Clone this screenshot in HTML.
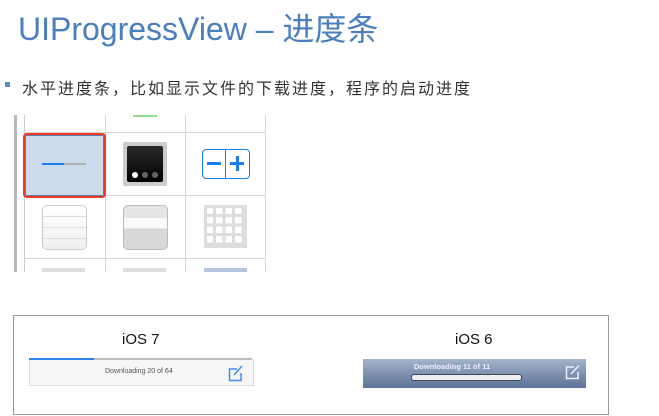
<!DOCTYPE html>
<html><head><meta charset="utf-8"><style>
body{margin:0;width:659px;height:416px;background:#fff;position:relative;overflow:hidden;font-family:"Liberation Sans","Noto Sans CJK SC",sans-serif}
.a{position:absolute}
</style></head><body>
<div class="a" style="left:18px;top:4px;font-size:32px;color:#4a7fbd;white-space:nowrap;letter-spacing:0px">UIProgressView – 进度条</div>
<div class="a" style="left:5px;top:82px;width:5px;height:5px;background:#5b8dc9"></div>
<div class="a" style="left:22px;top:75px;font-size:16px;color:#333;white-space:nowrap;letter-spacing:2px">水平进度条，比如显示文件的下载进度，程序的启动进度</div>

<!-- grid -->
<div class="a" style="left:14px;top:115px;width:3px;height:157px;background:#b8b8b8"></div>
<div class="a" style="left:24px;top:115px;width:1px;height:157px;background:#ccc"></div>
<div class="a" style="left:105px;top:115px;width:1px;height:157px;background:#d6d6d6"></div>
<div class="a" style="left:185px;top:115px;width:1px;height:157px;background:#d6d6d6"></div>
<div class="a" style="left:265px;top:115px;width:1px;height:157px;background:#d6d6d6"></div>
<div class="a" style="left:24px;top:132px;width:242px;height:1px;background:#d6d6d6"></div>
<div class="a" style="left:24px;top:195px;width:242px;height:1px;background:#d6d6d6"></div>
<div class="a" style="left:24px;top:258px;width:242px;height:1px;background:#d6d6d6"></div>
<div class="a" style="left:133px;top:115px;width:24px;height:2px;background:#8fdc8f"></div>
<div class="a" style="left:23px;top:133px;width:79px;height:61px;border:2px solid #f03a1e;border-radius:4px;background:#ccdcee;box-shadow:inset 0 0 0 1px #5a7cb0"></div>
<div class="a" style="left:42px;top:163px;width:22px;height:2px;background:#1a7ef0"></div>
<div class="a" style="left:64px;top:163px;width:22px;height:2px;background:#b0b0b0"></div>
<div class="a" style="left:123px;top:142px;width:44px;height:44px;background:#ccc;border-radius:2px"></div>
<div class="a" style="left:127px;top:146px;width:36px;height:36px;background:linear-gradient(#2a2a2a,#000);border-radius:2px"></div>
<div class="a" style="left:132px;top:172px;width:6px;height:6px;border-radius:50%;background:#fff"></div>
<div class="a" style="left:142px;top:172px;width:6px;height:6px;border-radius:50%;background:#666"></div>
<div class="a" style="left:152px;top:172px;width:6px;height:6px;border-radius:50%;background:#666"></div>
<div class="a" style="left:202px;top:149px;width:46px;height:28px;border:1.5px solid #1a7ef0;border-radius:4px"></div>
<div class="a" style="left:225px;top:149px;width:1px;height:30px;background:#1a7ef0"></div>
<div class="a" style="left:207px;top:162px;width:14px;height:3px;background:#1a7ef0"></div>
<div class="a" style="left:230px;top:162px;width:14px;height:3px;background:#1a7ef0"></div>
<div class="a" style="left:235.5px;top:156px;width:3px;height:15px;background:#1a7ef0"></div>
<div class="a" style="left:42px;top:205px;width:43px;height:43px;border:1px solid #ccc;border-radius:5px;background:linear-gradient(#fff,#f0f0f0)"></div>
<div class="a" style="left:43px;top:216px;width:43px;height:1px;background:#ddd"></div>
<div class="a" style="left:43px;top:227px;width:43px;height:1px;background:#ddd"></div>
<div class="a" style="left:43px;top:238px;width:43px;height:1px;background:#ddd"></div>
<div class="a" style="left:123px;top:205px;width:43px;height:43px;border:1px solid #bbb;border-radius:5px;background:linear-gradient(#e4e4e4 0,#e4e4e4 28%,#fafafa 28%,#fafafa 52%,#d8d8d8 52%)"></div>
<div class="a" style="left:204px;top:205px;width:43px;height:43px;background:#ddd"></div>
<div class="a" style="left:207px;top:208px;width:37px;height:37px;background-image:linear-gradient(90deg,transparent 6px,#ddd 6px,#ddd 9px,transparent 9px),linear-gradient(transparent 6px,#ddd 6px,#ddd 9px,transparent 9px);background-size:9.5px 9.5px;background-color:#fff"></div>
<div class="a" style="left:42px;top:268px;width:43px;height:4px;background:#ddd"></div>
<div class="a" style="left:123px;top:268px;width:43px;height:4px;background:#ddd"></div>
<div class="a" style="left:204px;top:268px;width:43px;height:4px;background:#b5c5e0"></div>

<!-- bottom box -->
<div class="a" style="left:13px;top:315px;width:594px;height:98px;border:1px solid #999"></div>
<div class="a" style="left:122px;top:331px;font-size:15px;color:#111">iOS 7</div>
<div class="a" style="left:455px;top:331px;font-size:15px;color:#111">iOS 6</div>
<div class="a" style="left:29px;top:359px;width:223px;height:26px;background:#f6f6f6;border:1px solid #ddd;border-top:none"></div>
<div class="a" style="left:29px;top:358px;width:223px;height:2px;background:#bbb"></div>
<div class="a" style="left:29px;top:358px;width:65px;height:2px;background:#2a85ee"></div>
<div class="a" style="left:105px;top:368px;font-size:7px;color:#555">Downloading 20 of 64</div>
<svg class="a" style="left:228px;top:364px" width="16" height="18" viewBox="0 0 16 18"><path d="M9 5H1.5V16.5H13V9" fill="none" stroke="#3d8ef0" stroke-width="1.5"/><path d="M6 11L14 2" stroke="#3d8ef0" stroke-width="1.5"/></svg>
<div class="a" style="left:363px;top:359px;width:223px;height:29px;background:linear-gradient(#a3b3c9,#5b7399)"></div>
<div class="a" style="left:367px;top:362px;width:170px;text-align:center;font-size:7.5px;font-weight:bold;color:#eef">Downloading 11 of 11</div>
<div class="a" style="left:411px;top:374px;width:109px;height:5px;border-radius:3px;background:#eee;border:1px solid #445"></div>
<svg class="a" style="left:565px;top:364px" width="16" height="16" viewBox="0 0 16 16"><path d="M9 3H1.5V14.5H13V8" fill="none" stroke="#eef" stroke-width="1.5"/><path d="M6 10L14 1.5" stroke="#eef" stroke-width="1.5"/></svg>
</body></html>
